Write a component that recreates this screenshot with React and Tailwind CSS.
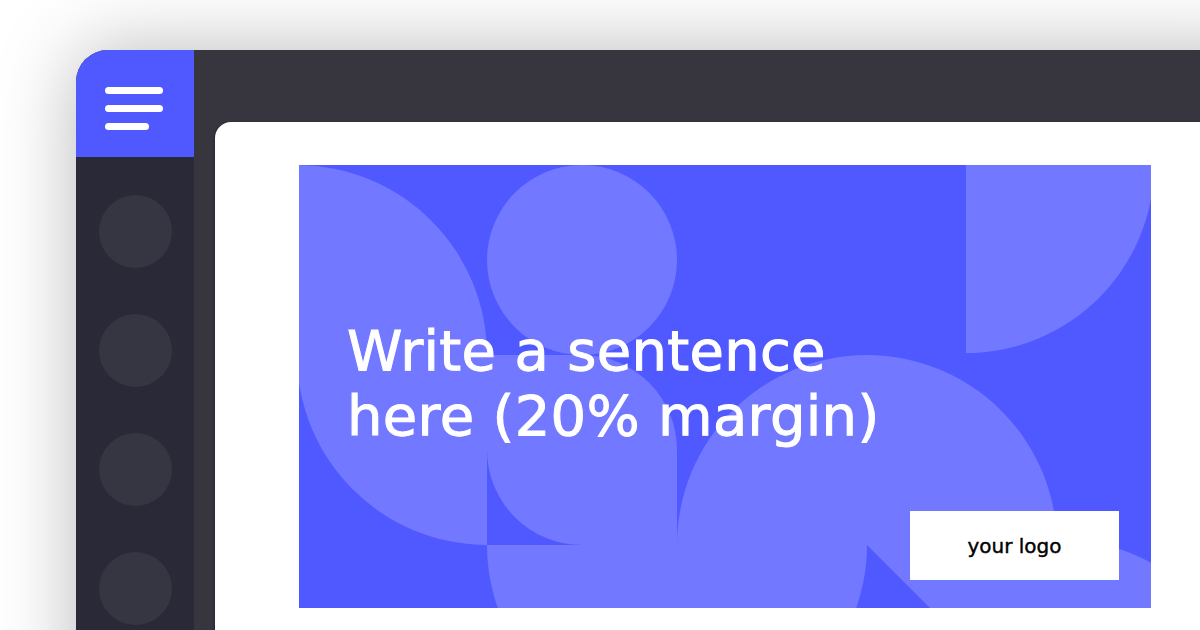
import React from "react";

const LIGHT = "#7278ff";

function Pattern() {
  // Bauhaus-style tiles, 190px grid, drawn in page coordinates
  return (
    <svg
      className="absolute inset-0"
      width="852"
      height="443"
      viewBox="299 165 852 443"
      fill={LIGHT}
    >
      <path d="M297 355 L297 165 A190 190 0 0 1 487 355 Z" />
      <path d="M487 355 L487 545 A190 190 0 0 1 297 355 Z" />
      <circle cx="582" cy="260" r="95" />
      <path d="M487 355 L582 355 A95 95 0 0 1 677 450 L677 545 L582 545 A95 95 0 0 1 487 450 Z" />
      <path d="M487 545 L867 545 A190 190 0 0 1 487 545 Z" />
      <path d="M677 545 A190 190 0 0 1 1057 545 Z" />
      <path d="M867 545 L1057 545 L1057 735 Z" />
      <path d="M966 165 L1154 165 A188 188 0 0 1 966 353 Z" />
      <path d="M1057 737 L1057 539 A198 198 0 0 1 1255 737 Z" />
    </svg>
  );
}

export default function App() {
  const dots = [0, 1, 2, 3];

  return (
    <div className="w-[1200px] h-[630px] bg-white overflow-hidden pl-[76px] pt-[50px]">
      <div className="flex w-[1200px] h-[700px] rounded-tl-[32px] overflow-hidden shadow-[0_0_80px_rgba(0,0,0,0.28)]">
        {/* Sidebar */}
        <div className="w-[118px] shrink-0 bg-[#2a2937] flex flex-col">
          <div className="h-[107px] bg-[#4f59ff] flex flex-col gap-[11px] pt-[37px] pl-[29px]">
            <div className="w-[58px] h-[7px] rounded-full bg-white" />
            <div className="w-[58px] h-[7px] rounded-full bg-white" />
            <div className="w-[44px] h-[7px] rounded-full bg-white" />
          </div>
          <div className="flex flex-col items-center pt-[38px] gap-[46px]">
            {dots.map((d) => (
              <div key={d} className="w-[73px] h-[73px] rounded-full bg-[#363542]" />
            ))}
          </div>
        </div>

        {/* Main area */}
        <div className="flex-1 bg-[#37363f] pl-[21px] pt-[72px]">
          <div className="h-full bg-white rounded-tl-[16px] pl-[84px] pt-[43px] shadow-[-1px_0_2px_rgba(0,0,0,0.25)]">
            <div className="relative w-[852px] h-[443px] bg-[#4f59ff] overflow-hidden flex flex-col">
              <Pattern />
              <h1 className="relative pl-[48px] pt-[153px] text-white text-[56px] leading-[65px] tracking-[0.3px] [-webkit-text-stroke:1px_white] font-['DejaVu_Sans',sans-serif]">
                Write a sentence
                <br />
                here (20% margin)
              </h1>
              <div className="relative mt-auto self-end mr-[32px] mb-[28px] w-[209px] h-[69px] bg-white flex items-center justify-center">
                <span className="text-[20px] text-black [-webkit-text-stroke:0.4px_black] font-['DejaVu_Sans',sans-serif]">your logo</span>
              </div>
            </div>
          </div>
        </div>
      </div>
    </div>
  );
}
